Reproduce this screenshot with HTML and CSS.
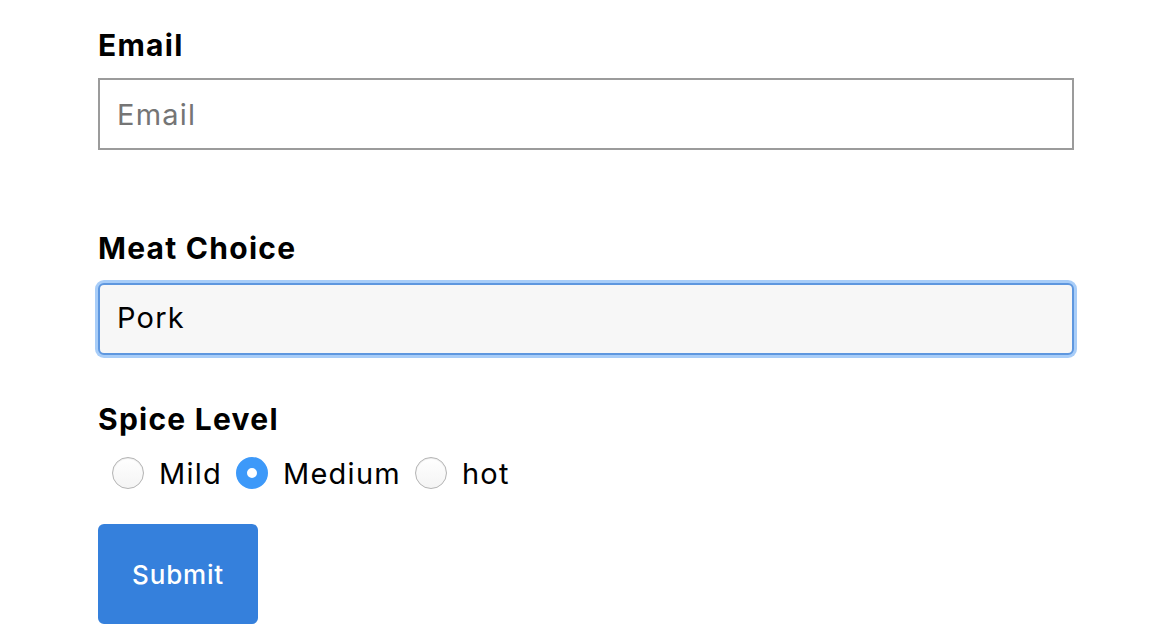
FILE: index.html
```html
<html>
    <head>
        <link rel="stylesheet" href="styles.css">
    </head>
    <body>
        <form class="order-form">
            <label class="field-label" for="email">Email</label>
            <input class="text-input" type="email" id="email" placeholder="Email">

            <label class="field-label meat-label" for="meat">Meat Choice</label>
            <select class="select-input" id="meat">
                <option>Pork</option>
                <option>Beef</option>
                <option>Chicken</option>
            </select>

            <div class="field-label spice-label">Spice Level</div>
            <div class="radio-row">
                <label class="radio-item"><input type="radio" name="spice" value="mild"> Mild</label>
                <label class="radio-item"><input type="radio" name="spice" value="medium" checked> Medium</label>
                <label class="radio-item"><input type="radio" name="spice" value="hot"> hot</label>
            </div>

            <button class="submit-btn" type="submit">Submit</button>
        </form>
    </body>
</html>
```

FILE: styles.css
```css
body {
    margin: 0;
    font-family: Inter, "Liberation Sans", Arial, sans-serif;
    background-color: #ffffff;
    color: #000000;
}

.order-form {
    display: flex;
    flex-direction: column;
    align-items: flex-start;
    padding: 27px 0 0 98px;
    width: 976px;
}

.field-label {
    display: block;
    font-size: 30px;
    line-height: 36px;
    font-weight: bold;
    letter-spacing: 1.25px;
}

.text-input {
    box-sizing: border-box;
    width: 976px;
    height: 72px;
    margin-top: 15px;
    border: 2px solid #9b9b9b;
    border-radius: 0;
    padding: 0 17px;
    font-family: inherit;
    font-size: 29px;
    letter-spacing: 1.2px;
    color: #000000;
    outline: none;
}

.text-input::placeholder {
    color: #757575;
}

.meat-label {
    margin-top: 80px;
}

.select-input {
    -webkit-appearance: none;
    appearance: none;
    box-sizing: border-box;
    width: 976px;
    height: 72px;
    margin-top: 17px;
    padding: 0 17px 4px;
    border: 2px solid #5e97df;
    border-radius: 6px;
    box-shadow: 0 0 0 3px #a8cdf8;
    background-color: #f7f7f7;
    font-family: inherit;
    font-size: 29px;
    letter-spacing: 1.2px;
    color: #000000;
    outline: none;
}

.spice-label {
    margin-top: 46px;
}

.radio-row {
    display: flex;
    align-items: center;
    height: 40px;
    margin-top: 16px;
    padding-left: 14px;
    gap: 14px;
}

.radio-item {
    display: flex;
    align-items: center;
    gap: 15px;
    font-size: 29px;
    letter-spacing: 1.25px;
}

.radio-item input {
    -webkit-appearance: none;
    appearance: none;
    box-sizing: border-box;
    width: 32px;
    height: 32px;
    margin: 0;
    border-radius: 50%;
    border: 1px solid #b4b4b4;
    background: linear-gradient(#ffffff, #f4f4f4);
    box-shadow: inset 0 1px 1px rgba(0, 0, 0, 0.08);
}

.radio-item input:checked {
    border: 11px solid #3d99f9;
    background: #ffffff;
    box-shadow: none;
}

.submit-btn {
    width: 160px;
    height: 100px;
    margin-top: 31px;
    border: none;
    border-radius: 6px;
    background-color: #3580dc;
    color: #ffffff;
    font-family: inherit;
    font-size: 26px;
    font-weight: 500;
    letter-spacing: 0.8px;
    cursor: pointer;
}
```
